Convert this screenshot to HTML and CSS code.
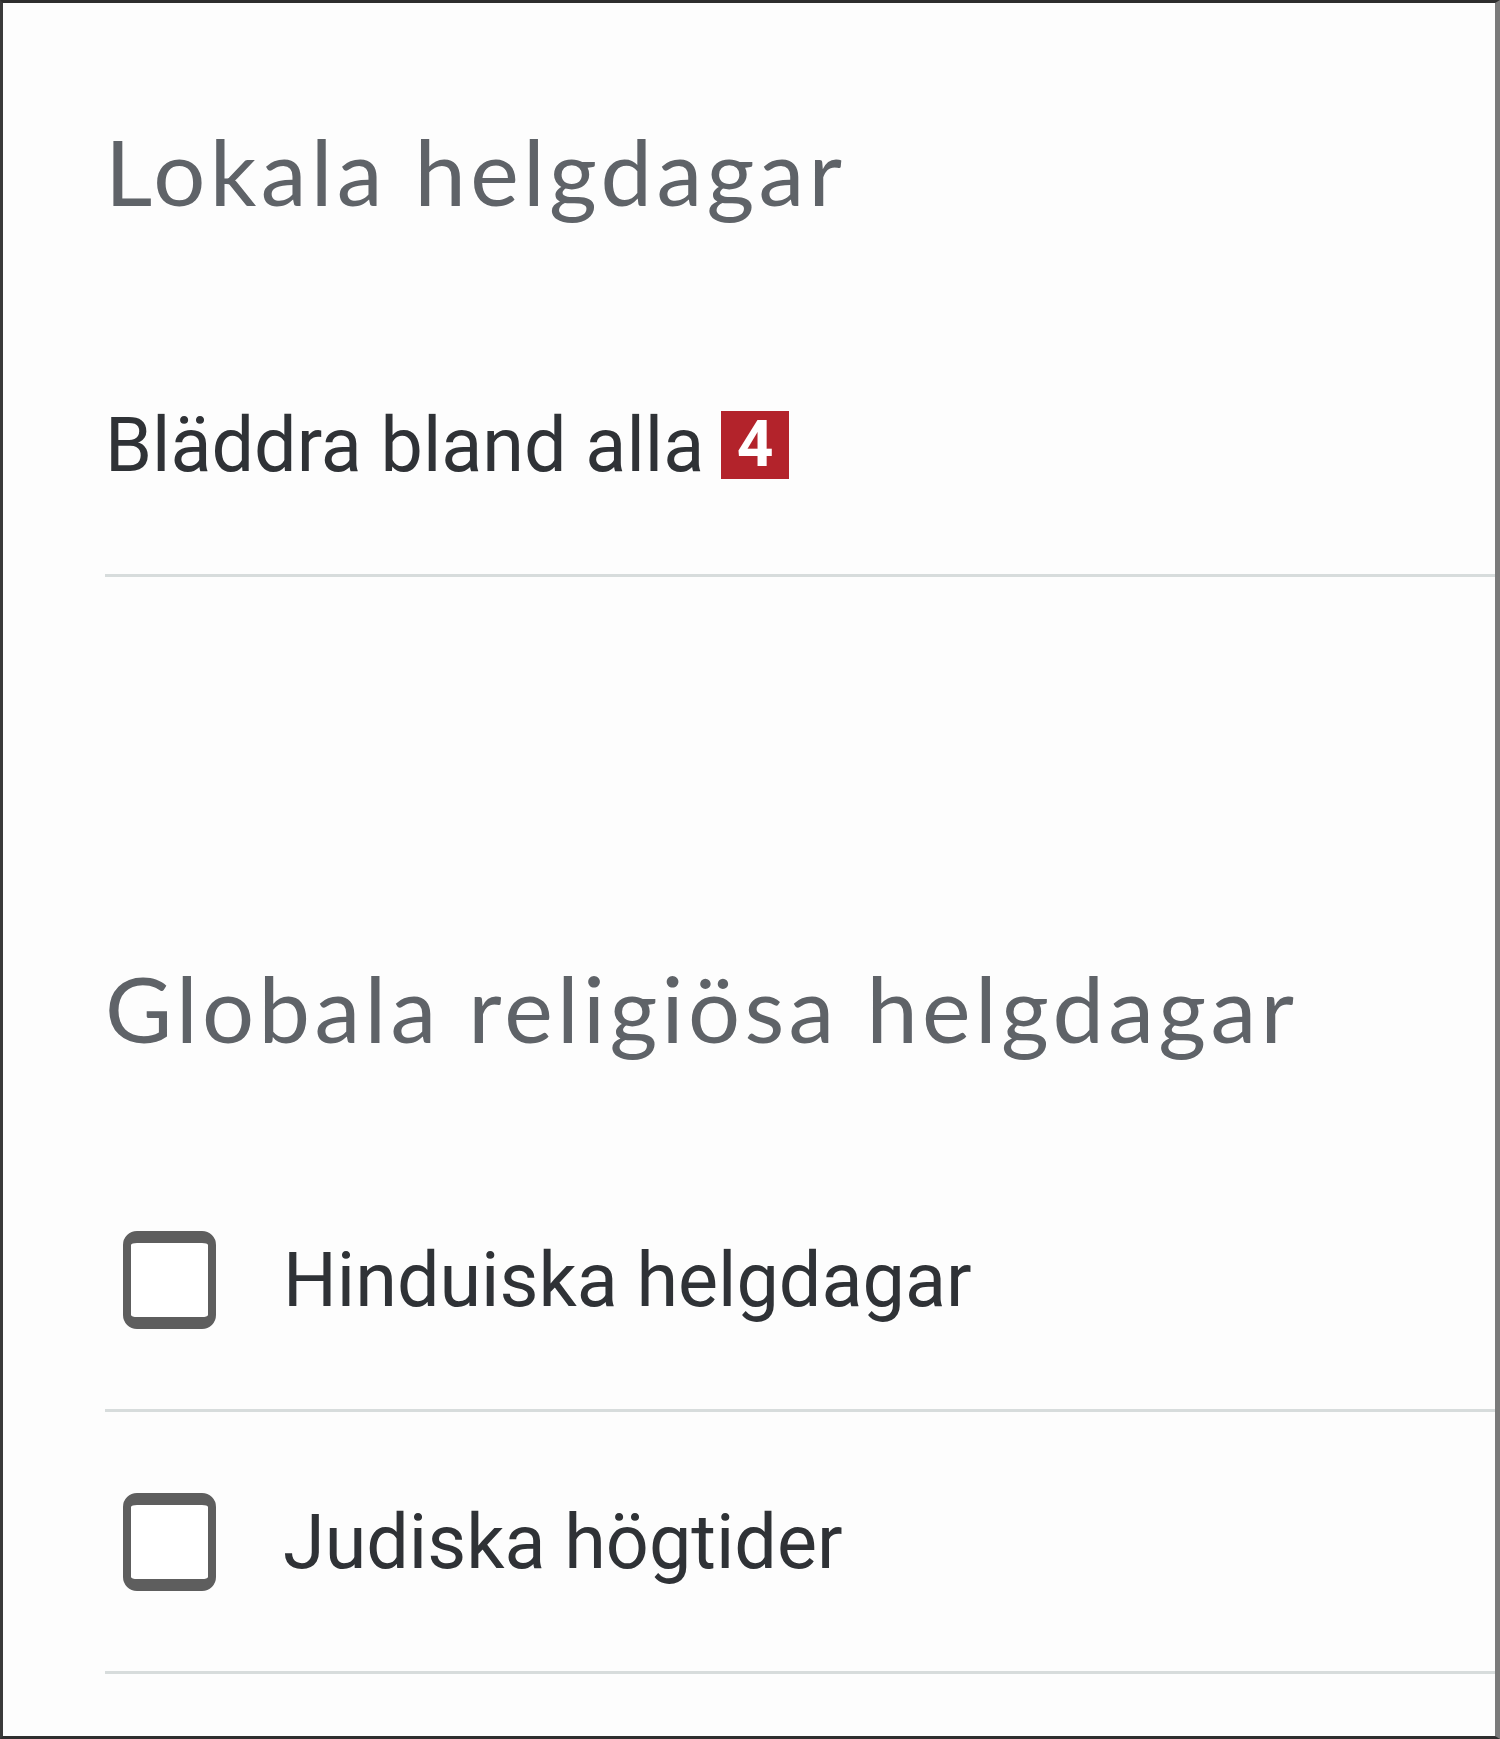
FILE: index.html
```html
<!DOCTYPE html>
<html lang="sv">
<head>
<meta charset="utf-8">
<title>Helgdagar</title>
<link rel="stylesheet" href="styles.css">
</head>
<body>
<div class="panel">
  <section class="group">
    <h2 class="group-title">Lokala helgdagar</h2>
    <div class="row">
      <span class="row-label">Bläddra bland alla</span>
      <span class="badge">4</span>
    </div>
  </section>
  <section class="group group-second">
    <h2 class="group-title">Globala religiösa helgdagar</h2>
    <label class="row">
      <span class="checkbox"></span>
      <span class="row-label check-label">Hinduiska helgdagar</span>
    </label>
    <label class="row">
      <span class="checkbox"></span>
      <span class="row-label check-label">Judiska högtider</span>
    </label>
  </section>
</div>
</body>
</html>
```

FILE: styles.css
```css
html, body {
  margin: 0;
  padding: 0;
  background: #fdfdfd;
}

.panel {
  box-sizing: border-box;
  width: 1500px;
  height: 1739px;
  border-top: 3px solid #2e2e2e;
  border-left: 3px solid #3a3a3a;
  border-bottom: 3px solid #2e2e2e;
  border-right: 5px solid #7a7a7a;
  background: #fdfdfd;
  padding: 108px 0 0 102px;
  overflow: hidden;
}

.group-title {
  margin: 0;
  font-family: Lato, "Open Sans", sans-serif;
  font-weight: 400;
  font-size: 92px;
  line-height: 120px;
  color: #5f6368;
  letter-spacing: 4.3px;
}

.group-second {
  margin-top: 371px;
}

.row {
  display: flex;
  align-items: center;
  height: 259px;
  border-bottom: 3px solid #d7dcdc;
}

.group-title + .row {
  margin-top: 84px;
}

.group-second .group-title + .row {
  margin-top: 82px;
}

.row-label {
  font-family: Roboto, "Liberation Sans", sans-serif;
  font-size: 75.5px;
  line-height: 100px;
  color: #2f3236;
}

.badge {
  display: inline-flex;
  align-items: center;
  justify-content: center;
  width: 68px;
  height: 68px;
  margin-left: 17px;
  background: #b3232b;
  color: #ffffff;
  font-family: Roboto, "Liberation Sans", sans-serif;
  font-weight: 700;
  font-size: 64px;
  line-height: 1;
}

.checkbox {
  box-sizing: border-box;
  flex: none;
  width: 93px;
  height: 98px;
  margin-left: 18px;
  border-style: solid;
  border-color: #5e5e5e;
  border-width: 12px 8px;
  border-radius: 14px;
  background: #ffffff;
}

.check-label {
  margin-left: 67px;
}
```
